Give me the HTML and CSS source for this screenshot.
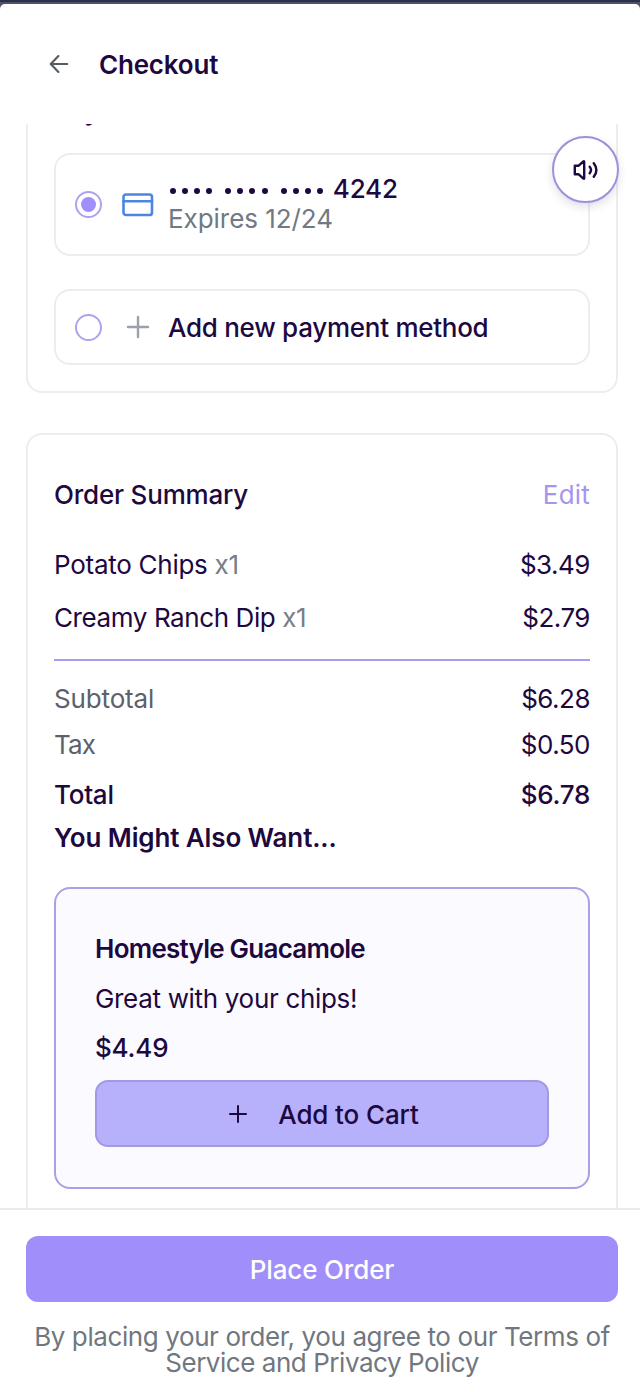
FILE: index.html
```html
<!DOCTYPE html>
<html lang="en">
<head>
<meta charset="utf-8">
<title>Checkout</title>
<link rel="stylesheet" href="styles.css">
</head>
<body>
<div class="screen">
  <header class="header">
    <svg class="back" viewBox="0 0 20 20"><path d="M18.3 10H2M9.4 2L1.7 10l7.7 8"/></svg>
    <h1 class="title">Checkout</h1>
  </header>

  <main class="content">
    <section class="card payment">
      <h2 class="payment-title">Payment Method</h2>
      <div class="option option-card">
        <span class="radio radio-on"></span>
        <svg class="icon-card" viewBox="0 0 32 24"><rect x="1.5" y="1.5" width="28.5" height="20.5" rx="2.6"/><path d="M1.5 8.2H30"/></svg>
        <div class="option-text">
          <div class="number"><span class="dots"><i></i><i></i><i></i><i></i></span><span class="dots"><i></i><i></i><i></i><i></i></span><span class="dots"><i></i><i></i><i></i><i></i></span><span class="last4">4242</span></div>
          <div class="expires">Expires 12/24</div>
        </div>
      </div>
      <div class="option option-new">
        <span class="radio"></span>
        <svg class="icon-plus" viewBox="0 0 24 24"><path d="M12 2v20M2 12h20"/></svg>
        <span class="new-label">Add new payment method</span>
      </div>
    </section>

    <section class="card summary">
      <div class="row heading"><h2 class="summary-title">Order Summary</h2><a class="edit">Edit</a></div>
      <div class="row item"><span class="chips">Potato Chips <span class="qty">x1</span></span><span class="price">$3.49</span></div>
      <div class="row item second"><span class="dip">Creamy Ranch Dip <span class="qty">x1</span></span><span class="price">$2.79</span></div>
      <hr class="divider">
      <div class="row subtotal"><span class="muted">Subtotal</span><span class="price">$6.28</span></div>
      <div class="row tax"><span class="muted">Tax</span><span class="price">$0.50</span></div>
      <div class="row total"><span>Total</span><span>$6.78</span></div>
      <h3 class="also">You Might Also Want...</h3>
      <div class="suggestion">
        <h4 class="product">Homestyle Guacamole</h4>
        <p class="pitch">Great with your chips!</p>
        <p class="cost">$4.49</p>
        <button class="add">
          <svg class="add-plus" viewBox="0 0 18 18"><path d="M9 1v16M1 9h16"/></svg>
          <span class="add-label">Add to Cart</span>
        </button>
      </div>
    </section>
  </main>

  <footer class="footer">
    <button class="place">Place Order</button>
    <p class="legal"><span class="legal-a">By placing your order, you agree to our Terms of</span> <span class="legal-b">Service and Privacy Policy</span></p>
  </footer>

  <button class="sound" aria-label="Read aloud">
    <svg viewBox="0 0 26 22"><path d="M1.8 6.8h3.6l5-4.4q.8-.5.8.5v16.2q0 1-.8.5l-5-4.4H1.8z"/><path d="M16.7 7.7q2.6 3.3 0 6.6M20.8 4.2q5.2 6.8 0 13.6"/></svg>
  </button>
</div>
</body>
</html>
```

FILE: styles.css
```css
* { box-sizing: border-box; }

body {
  margin: 0;
  background: #4f5268;
  color: #1d0840;
  font-family: Inter, "Liberation Sans", sans-serif;
  font-size: 26px;
  line-height: 30px;
}

h1, h2, h3, h4, p { margin: 0; font-size: inherit; }
button { font: inherit; color: inherit; margin: 0; padding: 0; }
svg { fill: none; stroke-linecap: round; stroke-linejoin: round; flex: none; }

.screen {
  position: relative;
  display: flex;
  flex-direction: column;
  width: 640px;
  height: 1392px;
  border-top: 2px solid #2b3049;
  overflow: hidden;
}

.header {
  display: flex;
  align-items: center;
  flex: none;
  height: 122px;
  margin-top: 2px;
  margin-bottom: -2px;
  padding: 0 0 0 49px;
  border-bottom: 2px solid #f5f5f6;
  border-radius: 5px 5px 0 0;
  background: #fff;
}
.back { width: 20px; height: 20px; stroke: #555c66; stroke-width: 2.1; margin-top: -1px; }
.title { margin: 2px 0 0 30px; font-weight: 600; letter-spacing: -0.2px; }

.content {
  flex: 1;
  min-height: 0;
  overflow: hidden;
  padding: 0 22px 0 26px;
  background: #fff;
}

.card { border: 2px solid #ededee; border-radius: 16px; padding: 0 26px; background: #fff; }

.payment { display: flow-root; height: 269px; border-top: 0; border-radius: 0 0 16px 16px; }
.payment-title { margin-top: -28px; font-weight: 600; letter-spacing: -0.4px; }
.option {
  display: flex;
  align-items: center;
  padding-left: 19px;
  border: 2px solid #ededee;
  border-radius: 16px;
}
.option-card { height: 103px; margin-top: 27px; }
.option-new { height: 76px; margin-top: 33px; }
.radio {
  display: flex;
  flex: none;
  width: 27px;
  height: 27px;
  border: 2px solid #b0a1f0;
  border-radius: 50%;
}
.radio-on::before {
  content: "";
  width: 15px;
  height: 15px;
  margin: 4px;
  border-radius: 50%;
  background: #a08ffa;
}
.icon-card { width: 32px; height: 24px; margin-left: 20px; stroke: #4b87e0; stroke-width: 2.6; }
.icon-plus { width: 24px; height: 24px; margin-left: 24px; stroke: #9aa1ab; stroke-width: 2.4; }
.option-text { margin: -2px 0 0 14px; }
.number { display: flex; align-items: center; height: 29px; font-weight: 500; }
.dots { display: flex; gap: 6.1px; margin: 3px 13px 0 2px; }
.dots + .dots { margin-left: 0; }
.dots i { width: 6px; height: 6px; border-radius: 50%; background: #1d0840; }
.last4 { margin-left: -3px; letter-spacing: -0.2px; }
.expires { height: 29px; line-height: 29px; color: #717982; letter-spacing: -0.05px; }
.new-label { margin: 2px 0 0 18px; font-weight: 500; letter-spacing: -0.27px; }

.summary { height: 900px; margin-top: 40px; padding-top: 45px; }
.row { display: flex; justify-content: space-between; height: 30px; white-space: nowrap; }
.summary-title { font-weight: 500; letter-spacing: -0.2px; }
.edit { color: #a596ec; letter-spacing: 0.2px; }
.item { margin-top: 40px; }
.second { margin-top: 23px; }
.chips { letter-spacing: -0.27px; }
.dip { letter-spacing: -0.4px; }
.price { letter-spacing: -0.5px; }
.qty { color: #777e87; }
.divider { height: 2px; margin: 26px 0 23px; border: 0; background: #a99bef; }
.muted { color: #5b626c; letter-spacing: -0.15px; }
.tax { margin-top: 16px; }
.tax .muted { letter-spacing: -0.9px; }
.total { margin-top: 20px; font-weight: 500; letter-spacing: -0.25px; }
.also { margin-top: 13px; font-weight: 600; letter-spacing: -0.12px; }

.suggestion {
  height: 302px;
  margin-top: 34px;
  padding: 45px 39px 0;
  border: 2px solid #ab9fe6;
  border-radius: 16px;
  background: #fafaff;
}
.product { font-weight: 600; letter-spacing: -0.75px; }
.pitch { margin-top: 20px; letter-spacing: -0.32px; }
.cost { margin-top: 19px; font-weight: 500; letter-spacing: -0.2px; }
.add {
  display: flex;
  align-items: center;
  justify-content: center;
  gap: 31px;
  width: 454px;
  height: 67px;
  margin-top: 17px;
  padding-left: 4px;
  border: 2px solid #a498e2;
  border-radius: 13px;
  background: #b6b1fa;
  font-weight: 500;
}
.add-plus { width: 18px; height: 18px; stroke: #1d0840; stroke-width: 2; }
.add-label { margin-top: 2px; letter-spacing: -0.12px; }

.footer {
  flex: none;
  height: 184px;
  padding: 26px 22px 0 26px;
  border-top: 2px solid #ebebec;
  background: #fff;
}
.place {
  width: 592px;
  height: 66px;
  padding-top: 2px;
  border: 0;
  border-radius: 12px;
  background: #a08efb;
  color: #fff;
  font-weight: 500;
  letter-spacing: -0.15px;
}
.legal { margin-top: 22px; line-height: 26px; text-align: center; color: #70777f; white-space: nowrap; }
.legal span { display: block; }
.legal-a { letter-spacing: -0.4px; }
.legal-b { letter-spacing: -0.46px; }

.sound {
  position: absolute;
  top: 134px;
  left: 552px;
  display: flex;
  align-items: center;
  justify-content: center;
  width: 67px;
  height: 67px;
  border: 2px solid #9d90dc;
  border-radius: 50%;
  background: #fff;
  box-shadow: 0 4px 8px rgba(40, 30, 80, 0.14);
}
.sound svg { width: 26px; height: 22px; stroke: #1d0840; stroke-width: 2.4; }
```
